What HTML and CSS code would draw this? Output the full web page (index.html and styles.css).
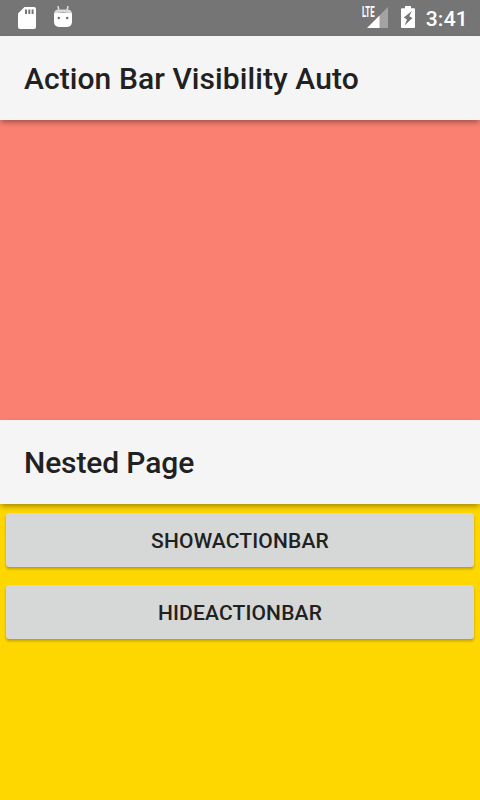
FILE: index.html
```html
<!DOCTYPE html>
<html lang="en">
<head>
<meta charset="utf-8">
<title>Action Bar Visibility Auto</title>
<link rel="stylesheet" href="styles.css">
</head>
<body>
<div class="status">
  <div class="notifications">
    <svg width="18" height="22" viewBox="0 0 18 22"><path fill="#fff" fill-rule="evenodd" d="M6.500 0H16a2 2 0 0 1 2 2v18a2 2 0 0 1-2 2H2a2 2 0 0 1-2-2V6.500zM7 2.500v4.500h2V2.500zM10.300 2.500v4.500h2V2.500zM13.600 2.500v4.500h2V2.500z"/></svg>
    <svg class="robot" width="18" height="22" viewBox="0 0 18 22"><path d="M4 0l.8 4M14 0l-.8 4" stroke="#ddd" stroke-width="1.500"/><path fill="#fff" d="M0 7h18v8.500q0 5.500-6 5.500H6Q0 21 0 15.500z"/><path fill="#d8d8d8" d="M0 8q0-4.500 4.500-4.500h9q4.500 0 4.500 4.500-2.500-1.500-9-1.500T0 8z"/><circle cx="4.800" cy="12" r="1.300" fill="#777"/><circle cx="13.200" cy="12" r="1.300" fill="#777"/></svg>
  </div>
  <div class="indicators">
    <div class="signal">
      <span class="lte">LTE</span>
      <svg width="21" height="21" viewBox="0 0 21 21"><path fill="#a3a3a3" d="M21 0v21H12V9z"/><path fill="#fff" d="M0 21L12.500 8.500V21z"/></svg>
    </div>
    <svg class="battery" width="14" height="22" viewBox="0 0 14 22"><path fill="#fff" d="M4 0h6v2.200h3q1 0 1 1V21q0 1-1 1H1q-1 0-1-1V3.200q0-1 1-1h3z"/><path fill="#757575" d="M10.800 5L2.800 11.500L6 13.500L3.500 19.500L11.500 12L8.300 10.200z"/></svg>
    <span class="clock">3:41</span>
  </div>
</div>
<header class="action-bar main-bar">Action Bar Visibility Auto</header>
<div class="outer"></div>
<header class="action-bar nested-bar">Nested Page</header>
<main class="nested">
  <button>SHOWACTIONBAR</button>
  <button>HIDEACTIONBAR</button>
</main>
</body>
</html>
```
FILE: styles.css
```css
body {
  margin: 0;
  height: 800px;
  display: flex;
  flex-direction: column;
  overflow: hidden;
  font-family: Roboto, sans-serif;
  color: #212121;
}
svg { display: block; }
.status {
  height: 36px;
  box-sizing: border-box;
  padding: 0 12px 0 18px;
  display: flex;
  justify-content: space-between;
  background: #757575;
  color: #fff;
}
.notifications, .indicators { display: flex; }
.notifications { padding-top: 7px; gap: 18px; }
.robot { margin-top: -1px; }
.signal { display: flex; padding-top: 7px; }
.lte {
  width: 5px;
  font: 700 14px/13px Roboto, sans-serif;
  white-space: nowrap;
  transform: scaleX(.56);
  transform-origin: left;
  height: 12px;
  margin-top: -1px;
}
.battery { margin: 6px 0 0 13px; }
.clock {
  margin-left: 11px;
  font-size: 21px;
  font-weight: 500;
  letter-spacing: .25px;
  line-height: 38px;
}
.action-bar {
  height: 84px;
  box-sizing: border-box;
  padding-left: 24px;
  position: relative;
  z-index: 1;
  background: #f5f5f5;
  box-shadow: 0 3px 6px -1px rgba(0, 0, 0, .4);
  font-size: 30px;
  font-weight: 500;
  line-height: 86px;
}
.main-bar { letter-spacing: .08px; }
.nested-bar { letter-spacing: -.12px; }
.outer { height: 300px; background: #fa8072; }
.nested {
  flex: 1;
  display: flex;
  flex-direction: column;
  gap: 18px;
  padding: 9.400px 6px 0;
  background: #ffd700;
}
button {
  height: 54px;
  box-sizing: border-box;
  padding: 2px 0 0;
  border: 0;
  border-radius: 3px;
  background: #d6d8d7;
  box-shadow: 0 2px 3px rgba(0, 0, 0, .27);
  color: #212121;
  font: 500 21px/52px Roboto, sans-serif;
  letter-spacing: .15px;
}
```
